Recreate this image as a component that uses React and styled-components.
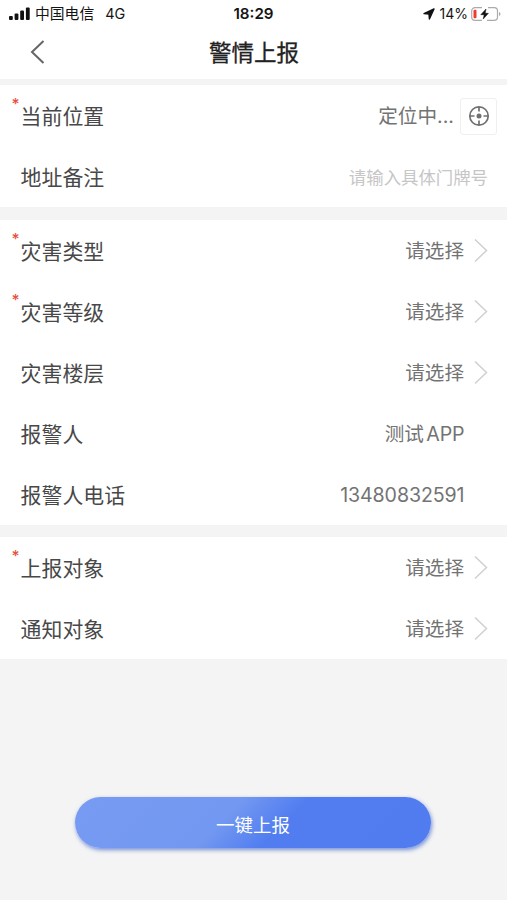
import { Fragment } from 'react';
import styled, { createGlobalStyle } from 'styled-components';

const GlobalStyle = createGlobalStyle`
    body{
        margin: 0;
        background: #f4f4f4;
        font-family: Inter, 'Noto Sans CJK SC', sans-serif;
    }
    *{
        box-sizing: border-box;
    }
`

const Page = styled.div`
    display: flex;
    flex-direction: column;
    min-height: 900px;
    background: #f4f4f4;
`
const Header = styled.header`
    height: 79px;
    background: #fff;
    margin-bottom: 6px;
`
const StatusBar = styled.div`
    display: grid;
    grid-template-columns: 1fr auto 1fr;
    align-items: center;
    height: 27px;
    padding: 0 6px 0 9px;
    font-size: 14.4px;
    line-height: 20px;
    color: #151515;
    white-space: nowrap;
`
const StatusSide = styled.div`
    display: flex;
    align-items: center;
    justify-content: ${props => props.$end ? 'flex-end' : 'flex-start'};
    svg{
        display: block;
        flex: none;
    }
`
const Carrier = styled.span`
    margin: 0 11px 0 5px;
    padding-top: 1px;
    font-size: 14.8px;
`
const Network = styled.span`
    font-size: 14.4px;
`
const Clock = styled.span`
    padding-right: 3px;
    font-size: 15.2px;
    font-weight: 600;
`
const Percent = styled.span`
    margin: 0 3px 0 5px;
    font-size: 14px;
`
const TitleBar = styled.div`
    display: grid;
    grid-template-columns: 60px 1fr 60px;
    align-items: center;
    height: 50px;
`
const BackButton = styled.button`
    display: flex;
    padding: 0 0 0 30px;
    border: 0;
    background: none;
`
const Title = styled.h1`
    margin: 0;
    padding: 2px 0 0 1px;
    text-align: center;
    font-size: 22.5px;
    line-height: 30px;
    font-weight: 400;
    -webkit-text-stroke: .3px #222;
    color: #222;
`
const Group = styled.section`
    margin-bottom: 12px;
    background: #fff;
    &:first-of-type{
        margin-bottom: 13px;
    }
`
const Row = styled.div`
    display: flex;
    align-items: center;
    justify-content: space-between;
    height: 61px;
    padding: 1px ${props => props.$locate ? '10px' : '19px'} 0 20.6px;
`
const Label = styled.div`
    position: relative;
    padding-top: 2px;
    font-size: 20.9px;
    line-height: 30px;
    color: #484848;
`
const Required = styled.span`
    position: absolute;
    left: -9px;
    top: -5px;
    font-size: 15.5px;
    line-height: 20px;
    font-weight: 500;
    color: #e8503f;
`
const Value = styled.div`
    display: flex;
    align-items: center;
    padding-right: ${props => props.$inset ? '23.5px' : '0'};
    font-size: 19.6px;
    line-height: 30px;
    color: #737373;
    word-spacing: ${props => props.$inset ? '-3px' : '0'};
    letter-spacing: ${props => props.$inset ? '-.1px' : '0'};
    svg{
        display: block;
        margin-left: 10px;
    }
`
const Placeholder = styled.div`
    padding-top: 1px;
    font-size: 17.4px;
    line-height: 30px;
    color: #c6c6c6;
`
const LocateButton = styled.button`
    display: flex;
    align-items: center;
    justify-content: center;
    width: 37px;
    height: 37px;
    margin-left: 6px;
    padding: 0;
    border: 1px solid #efefef;
    border-radius: 3px;
    background: #fff;
    svg{
        margin: 0;
    }
`
const Submit = styled.button`
    width: 356px;
    height: 51px;
    margin: 126px auto 0 74.5px;
    padding: 4px 0 0 1px;
    border: 0;
    border-radius: 26px;
    background: linear-gradient(135deg, #779bf2 0%, #7398f1 42%, #517df0 58%, #507cef 100%);
    box-shadow: 1px 2px 4px rgba(62, 100, 205, .7);
    font-family: inherit;
    font-size: 18.5px;
    line-height: 28px;
    color: #fff;
`

const groups = [
    [
        { label: '当前位置', value: '定位中...', required: true, type: 'locate' },
        { label: '地址备注', value: '请输入具体门牌号', type: 'input' },
    ],
    [
        { label: '灾害类型', value: '请选择', required: true, type: 'select' },
        { label: '灾害等级', value: '请选择', required: true, type: 'select' },
        { label: '灾害楼层', value: '请选择', type: 'select' },
        { label: '报警人', value: '测试 APP', type: 'text' },
        { label: '报警人电话', value: '13480832591', type: 'text' },
    ],
    [
        { label: '上报对象', value: '请选择', required: true, type: 'select' },
        { label: '通知对象', value: '请选择', type: 'select' },
    ],
]

function SignalIcon(){
    return(
        <svg width="21" height="14" viewBox="0 0 21 14" fill="#111">
            <rect x="0" y="9" width="3.8" height="4" rx="1"/>
            <rect x="5.6" y="6.5" width="3.8" height="6.5" rx="1"/>
            <rect x="11.2" y="3.5" width="3.8" height="9.5" rx="1"/>
            <rect x="16.9" y="0.5" width="3.8" height="12.5" rx="1"/>
        </svg>
    )
}

function LocationIcon(){
    return(
        <svg width="12" height="12" viewBox="0 0 12 12">
            <path d="M11 1 1 5.6l5 .5.4 4.9z" fill="#111" stroke="#111" strokeWidth="1.4" strokeLinejoin="round"/>
        </svg>
    )
}

function BatteryIcon(){
    return(
        <svg width="30" height="14" viewBox="0 0 30 14">
            <path d="M11 .7H4a3.3 3.3 0 0 0-3.3 3.3v6A3.3 3.3 0 0 0 4 13.3h7M17 .7h6.2A3.3 3.3 0 0 1 26.5 4v6a3.3 3.3 0 0 1-3.3 3.3H16" fill="none" stroke="#aaa" strokeWidth="1.2"/>
            <path d="M28 5v4q1.5-.7 1.5-2T28 5z" fill="#aaa"/>
            <rect x="2.5" y="2.7" width="3" height="8.6" rx="1" fill="#f03a30"/>
            <path d="M15 2 9.8 7.7h3.4l-1 4.4 5.2-5.8h-3.2z" fill="#111" stroke="#111" strokeWidth=".5"/>
        </svg>
    )
}

function TargetIcon(){
    return(
        <svg width="22" height="22" viewBox="0 0 22 22" fill="none" stroke="#707070" strokeWidth="1.7">
            <circle cx="11" cy="11" r="9.2"/>
            <path d="M11 2v4.5M11 15.5V20M2 11h4.5M15.5 11H20"/>
            <circle cx="11" cy="11" r="2.5" fill="#707070" stroke="none"/>
        </svg>
    )
}

function Arrow(){
    return(
        <svg width="14" height="24" viewBox="0 0 14 24" fill="none" stroke="#d0d0d0" strokeWidth="1.5">
            <path d="M1 .5l11.5 11L1 22.5"/>
        </svg>
    )
}

function FormRow({ item }){
    return(
        <Row $locate={item.type === 'locate'}>
            <Label>
                {item.required ? <Required>*</Required> : null}
                {item.label}
            </Label>
            {item.type === 'input' ?
                <Placeholder>{item.value}</Placeholder>
                : <Value $inset={item.type === 'text'}>
                    {item.value}
                    {item.type === 'select' ? <Arrow/> : null}
                    {item.type === 'locate' ? <LocateButton><TargetIcon/></LocateButton> : null}
                </Value>}
        </Row>
    )
}

function App(){
    return(
        <Fragment>
            <GlobalStyle/>
            <Page>
                <Header>
                    <StatusBar>
                        <StatusSide>
                            <SignalIcon/>
                            <Carrier>中国电信</Carrier>
                            <Network>4G</Network>
                        </StatusSide>
                        <Clock>18:29</Clock>
                        <StatusSide $end>
                            <LocationIcon/>
                            <Percent>14%</Percent>
                            <BatteryIcon/>
                        </StatusSide>
                    </StatusBar>
                    <TitleBar>
                        <BackButton>
                            <svg width="15" height="24" viewBox="0 0 15 24" fill="none" stroke="#666" strokeWidth="2">
                                <path d="M13.5 1 2 12l11.5 11"/>
                            </svg>
                        </BackButton>
                        <Title>警情上报</Title>
                    </TitleBar>
                </Header>
                {groups.map((rows, index)=>(
                    <Group key={index}>
                        {rows.map(item=><FormRow key={item.label} item={item}/>)}
                    </Group>
                ))}
                <Submit>一键上报</Submit>
            </Page>
        </Fragment>
    )
}

export default App
